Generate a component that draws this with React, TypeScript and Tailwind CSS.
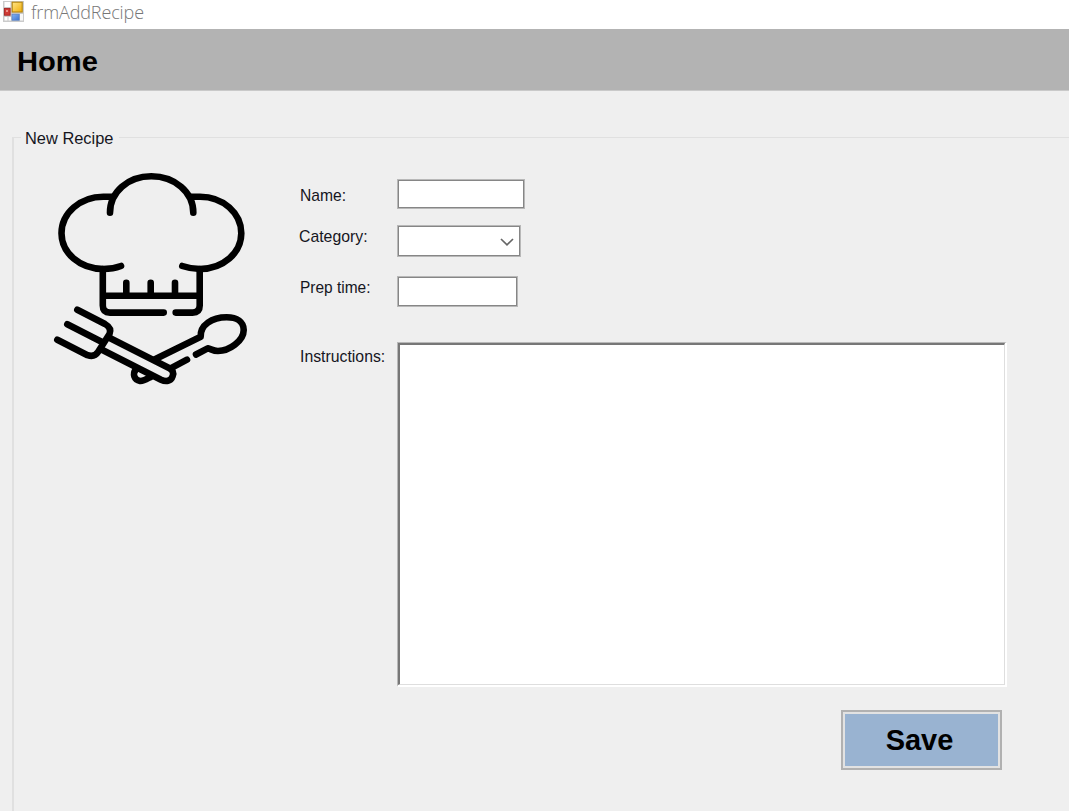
import React from "react";

function FormIcon() {
  return (
    <svg className="mt-[1px] h-[21px] w-[21px] shrink-0" viewBox="0 0 21 21">
      <defs>
        <linearGradient id="gold" x1="0" y1="0" x2="1" y2="1">
          <stop offset="0" stopColor="#ffe58a" />
          <stop offset="1" stopColor="#f0ae08" />
        </linearGradient>
        <linearGradient id="sky" x1="0" y1="0" x2="1" y2="1">
          <stop offset="0" stopColor="#86b4f4" />
          <stop offset="1" stopColor="#3c74d0" />
        </linearGradient>
      </defs>
      <rect width="21" height="21" fill="#cbcbcb" />
      <rect x="1.5" y="1" width="6" height="5" fill="#fff" />
      <rect x="1.5" y="16" width="3" height="3.5" fill="#fff" />
      <rect x="5.5" y="16" width="2.5" height="3.5" fill="#fff" />
      <rect x="17" y="13" width="3" height="6.5" fill="#f8f8f8" />
      <rect x="1.4" y="7.4" width="5.7" height="6.8" fill="#cf3b35" stroke="#a62320" strokeWidth="0.9" />
      <rect x="3.2" y="9" width="1.6" height="2" fill="#f4aaa0" />
      <rect x="9.2" y="1.2" width="10" height="9.8" fill="url(#gold)" stroke="#b7860c" strokeWidth="1.1" />
      <rect x="9" y="13.2" width="7.2" height="6" fill="url(#sky)" stroke="#5680c7" strokeWidth="0.7" />
    </svg>
  );
}

function ChefLogo() {
  return (
    <svg
      className="ml-[36px] mt-[28px] h-[225px] w-[205px] shrink-0"
      viewBox="50 165 205 225"
      fill="none"
      stroke="#000"
      strokeWidth="6.6"
      strokeLinecap="round"
      strokeLinejoin="round"
    >
      <path d="M110 212.7C110 192 128 176.3 151.3 176.3S193.3 192 193.3 212.7" />
      <path d="M112 196.7H103.3C80.3 196.7 61.5 213 61.5 233.3C61.5 253 80 269 103.3 269Q113 269 121 266" />
      <path d="M191.5 196.7H200C223 196.7 241.3 213 241.3 233.3C241.3 253 223 269 200 269Q191 269 182.3 266" />
      <path d="M102.8 269V305.5Q102.8 312.6 110 312.6H163.7M175.7 312.6H192.5Q199.7 312.6 199.7 305.5V269M102.8 295.7H199.7" />
      <path d="M126.3 282.8V295M150.7 282.8V295M175 282.8V295" />
      <path d="M77.3 309.7L105 324Q112 328 109.5 334L98 352Q94.5 357.5 87.5 355.2L57.3 339.7M67.3 324.3L101.5 341.7" />
      <path d="M108.3 337.3L169.5 368.3Q174.5 371 172.7 376C171 381.5 165.8 382 161 379.7L101 349.3" />
      <path d="M155.5 359L200.7 336.7C200 325 212 317.3 226.7 317.3C237 317.3 243.7 322 243.7 330C243.7 341 229 351 218 351C213 351 211 349 207.7 348.3L196 354.5M187 359.7L172 367.7" />
      <path d="M135.7 369.5C132.5 374 134 380 140 380.9C144 381.3 147.5 378.5 151 376.7" />
    </svg>
  );
}

const labelText = "whitespace-nowrap origin-left font-['Liberation_Sans'] text-[17px] leading-[20px] text-[#16161e]";

const fieldBox = "border border-[#b8b8b8] bg-white px-1 outline-none shadow-[inset_0_0_0_1px_#868686]";

export default function App() {
  return (
    <div className="flex h-[811px] w-[1069px] flex-col overflow-hidden bg-[#efefef] font-['Liberation_Sans',sans-serif]">
      <div className="flex h-[29px] shrink-0 bg-white pl-[3px]">
        <FormIcon />
        <span className="ml-[7px] font-['Open_Sans',sans-serif] text-[18px] font-light leading-[24px] tracking-[-0.12px] text-[#777]">frmAddRecipe</span>
      </div>
      <div className="flex h-[62px] shrink-0 items-center border-b border-[#c9c9c9] bg-[#b3b3b3] pl-[17px]">
        <span className="mt-[4px] origin-left scale-x-[1.04] text-[28px] font-bold leading-none text-black">Home</span>
      </div>
      <fieldset className="ml-[12px] mt-[36px] h-[684px] w-[1057px] shrink-0 border-l-2 border-t border-[#e0e0e0]">
        <legend className="ml-[7px] h-[20px] w-[98px] px-[4px]">
          <span className={`${labelText} inline-block scale-x-[0.965]`}>New Recipe</span>
        </legend>
        <div className="-mt-[11px] flex">
          <div className="mt-[1px] w-[286px] shrink-0">
            <ChefLogo />
          </div>
          <div className="w-[97px] shrink-0 pt-[50px]">
            <label htmlFor="name" className={`${labelText} block h-[41px] scale-x-[0.92]`}>Name:</label>
            <label htmlFor="category" className={`${labelText} -ml-px block h-[51px] scale-x-[0.93]`}>Category:</label>
            <label htmlFor="prep" className={`${labelText} block h-[69px] scale-x-[0.91]`}>Prep time:</label>
            <label htmlFor="steps" className={`${labelText} block scale-x-[0.93]`}>Instructions:</label>
          </div>
          <div className="flex w-[610px] flex-col pt-[43px]">
            <input id="name" className={`${fieldBox} h-[30px] w-[128px]`} />
            <button id="category" aria-label="Category" className={`${fieldBox} mt-[16px] flex h-[32px] w-[124px] items-center justify-end pr-[6px]`}>
              <svg className="mt-px h-[10px] w-[14px]" viewBox="0 0 14 10" fill="none" stroke="#666" strokeWidth="1.7">
                <path d="M1 2L7 7.8L13 2" />
              </svg>
            </button>
            <input id="prep" className={`${fieldBox} mt-[19px] h-[31px] w-[121px]`} />
            <div className="mt-[35px] h-[345px] w-[610px] border-b-2 border-r-2 border-white border-l border-t border-l-[#b8b8b8] border-t-[#b8b8b8]">
              <textarea id="steps" className="block h-full w-full resize-none border-b border-l-2 border-r border-t-2 border-b-[#dedede] border-l-[#777] border-r-[#dedede] border-t-[#777] bg-white outline-none" />
            </div>
            <button className="ml-[444px] mt-[23px] h-[60px] w-[161px] border-2 border-[#b1b1b1] bg-[#e2e2e2] p-[2px]">
              <span className="flex h-full w-full items-center justify-center bg-[#99b3d1] text-[29px] font-bold leading-none text-black">
                <span className="-translate-x-[2px]">Save</span>
              </span>
            </button>
          </div>
        </div>
      </fieldset>
    </div>
  );
}
